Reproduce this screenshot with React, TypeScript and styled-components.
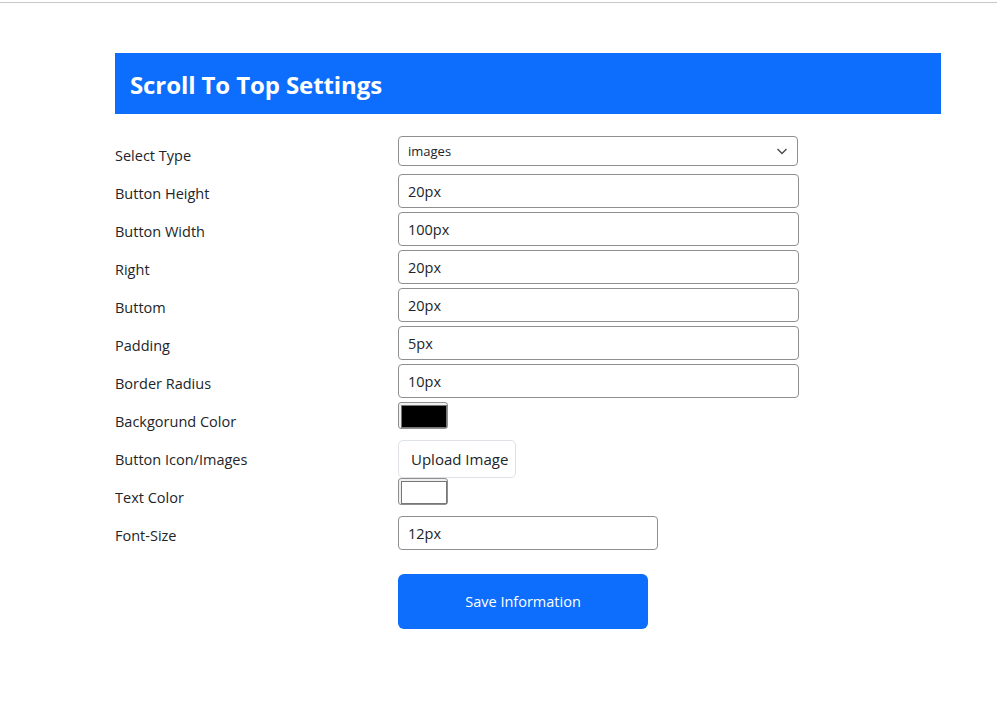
import React, { useState } from "react";
import styled, { createGlobalStyle } from "styled-components";

const GlobalStyle = createGlobalStyle`
  html, body {
    margin: 0;
    padding: 0;
    background: #fff;
  }
  body {
    font-family: "Open Sans", "Noto Sans", "Liberation Sans", sans-serif;
    color: #212529;
  }
  * { box-sizing: border-box; }
`;

const TopRule = styled.div`
  height: 1px;
  margin-top: 2px;
  background: #c8c8c8;
`;

const Page = styled.div`
  padding: 50px 56px 0 115px;
`;

const Header = styled.div`
  width: 826px;
  height: 61px;
  background: #0d6efd;
  display: flex;
  align-items: center;
  padding-left: 15px;
`;

const Title = styled.h1`
  margin: 0;
  color: #fff;
  font-size: 24px;
  font-weight: 700;
  letter-spacing: -0.1px;
  padding-top: 2px;
`;

const Form = styled.div`
  margin-top: 22px;
  display: grid;
  grid-template-columns: 283px 1fr;
  grid-auto-rows: 38px;
`;

const Label = styled.div`
  font-size: 14.5px;
  display: flex;
  align-items: center;
  padding-top: 1px;
`;

const Cell = styled.div`
  display: flex;
  align-items: flex-start;
`;

const SelectBox = styled.div`
  position: relative;
  width: 400px;
  height: 30px;
  border: 1px solid #8f8f8f;
  border-radius: 4px;
  display: flex;
  align-items: center;
  padding-left: 9px;
  font-size: 13px;
`;

const Chevron = styled.svg`
  position: absolute;
  right: 9px;
  top: 11px;
`;

const TextInput = styled.input<{ $w?: number }>`
  width: ${(p) => p.$w ?? 401}px;
  height: 34px;
  border: 1px solid #8f8f8f;
  border-radius: 4px;
  padding: 0 9px;
  font-family: inherit;
  font-size: 14.5px;
  color: #212529;
  outline: none;
`;

const Swatch = styled.div<{ $color: string }>`
  width: 50px;
  height: 27px;
  border: 1px solid #8f8f8f;
  border-radius: 3px;
  padding: 2px;
  background: #efefef;
  &::after {
    content: "";
    display: block;
    width: 100%;
    height: 100%;
    background: ${(p) => p.$color};
    border: 1px solid #777;
  }
`;

const UploadButton = styled.button`
  height: 38px;
  width: 118px;
  border: 1px solid #dee2e6;
  border-radius: 5px;
  background: #fff;
  font-family: inherit;
  font-size: 15px;
  color: #212529;
  padding: 0 0 0 12px;
  text-align: left;
  white-space: nowrap;
`;

const SaveRow = styled.div`
  padding: 20px 0 0 283px;
`;

const SaveButton = styled.button`
  width: 250px;
  height: 55px;
  border: none;
  border-radius: 6px;
  background: #0d6efd;
  color: #fff;
  font-family: inherit;
  font-size: 14.5px;
`;

const fields: { label: string; value: string }[] = [
  { label: "Button Height", value: "20px" },
  { label: "Button Width", value: "100px" },
  { label: "Right", value: "20px" },
  { label: "Buttom", value: "20px" },
  { label: "Padding", value: "5px" },
  { label: "Border Radius", value: "10px" },
];

export default function App() {
  const [values, setValues] = useState(fields.map((f) => f.value));
  const [fontSize, setFontSize] = useState("12px");

  return (
    <>
      <GlobalStyle />
      <TopRule />
      <Page>
        <Header>
          <Title>Scroll To Top Settings</Title>
        </Header>
        <Form>
          <Label>Select Type</Label>
          <Cell>
            <SelectBox>
              images
              <Chevron width="12" height="7" viewBox="0 0 12 7">
                <path d="M1.5 1 L6 5.5 L10.5 1" fill="none" stroke="#495057" strokeWidth="1.5" />
              </Chevron>
            </SelectBox>
          </Cell>
          {fields.map((f, i) => (
            <React.Fragment key={f.label}>
              <Label>{f.label}</Label>
              <Cell>
                <TextInput
                  value={values[i]}
                  onChange={(e) => {
                    const next = [...values];
                    next[i] = e.target.value;
                    setValues(next);
                  }}
                />
              </Cell>
            </React.Fragment>
          ))}
          <Label>Backgorund Color</Label>
          <Cell>
            <Swatch $color="#000" />
          </Cell>
          <Label>Button Icon/Images</Label>
          <Cell>
            <UploadButton>Upload Image</UploadButton>
          </Cell>
          <Label>Text Color</Label>
          <Cell>
            <Swatch $color="#fff" />
          </Cell>
          <Label>Font-Size</Label>
          <Cell>
            <TextInput $w={260} value={fontSize} onChange={(e) => setFontSize(e.target.value)} />
          </Cell>
        </Form>
        <SaveRow>
          <SaveButton>Save Information</SaveButton>
        </SaveRow>
      </Page>
    </>
  );
}
